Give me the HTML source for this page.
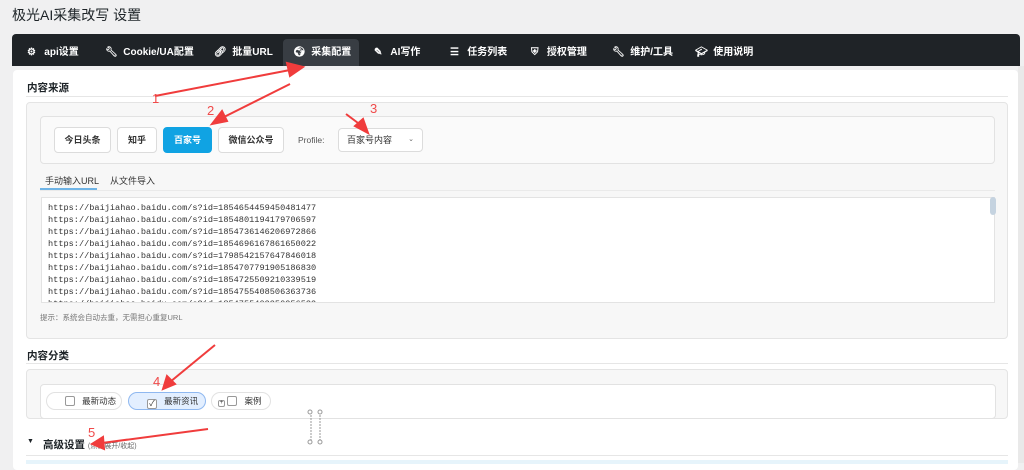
<!DOCTYPE html>
<html><head><meta charset="utf-8"><style>
*{box-sizing:border-box;margin:0;padding:0}
body{width:1024px;height:463px;overflow:hidden;background:#f0f0f1;font-family:"Liberation Sans","Noto Sans CJK SC",sans-serif;color:#1d2327;position:relative}
.abs{position:absolute}
.title{left:12px;top:5px;font-size:14px;color:#1d2327}
.nav{left:12px;top:34px;width:1008px;height:32px;background:#1f2327;border-radius:4px 4px 0 0}
.tab{position:absolute;top:5px;height:27px;line-height:27px;font-size:10px;font-weight:bold;color:#fff;white-space:nowrap}
.tab.act{background:#383d43;border-radius:4px 4px 0 0;padding:0 8px 0 10px}
.card{left:13px;top:70px;width:1005px;height:400px;background:#fff;border-radius:4px}
.h{font-size:10.5px;font-weight:bold;color:#1d2327}
.line{height:1px;background:#e6e6e6}
.panel{background:#f7f7f7;border:1px solid #e4e4e4;border-radius:4px}
.inner{background:#fafafa;border:1px solid #e2e2e2;border-radius:4px}
.btn{position:absolute;top:127px;height:26px;line-height:24px;border:1px solid #dcdcdc;border-radius:4px;background:#fff;font-size:9px;font-weight:bold;text-align:center;color:#333}
.ta{left:41px;top:197px;width:954px;height:106px;background:#fff;border:1px solid #e3e3e3;overflow:hidden;font-family:"Liberation Mono",monospace;font-size:8.6px;line-height:12px;padding:4px 6px;color:#333}
.pill{position:absolute;top:392px;height:18px;border:1px solid #e2e2e2;border-radius:9px;background:#fff;font-size:8.5px;line-height:16px;color:#333}
.cb{display:inline-block;width:10px;height:10px;border:1px solid #999;border-radius:2px;vertical-align:-2px;background:#fff}
</style></head><body>
<div class="abs title">极光AI采集改写 设置</div>
<div class="abs nav">
<div class="tab" style="left:15px">⚙&nbsp;&nbsp; api设置</div>
<div class="tab" style="left:93px">🔧︎&nbsp; Cookie/UA配置</div>
<div class="tab" style="left:202px">🔗︎&nbsp; 批量URL</div>
<div class="tab act" style="left:271px">🌍︎&nbsp; 采集配置</div>
<div class="tab" style="left:362px">✎&nbsp;&nbsp; AI写作</div>
<div class="tab" style="left:438px">☰&nbsp;&nbsp; 任务列表</div>
<div class="tab" style="left:519px">⛨&nbsp;&nbsp; 授权管理</div>
<div class="tab" style="left:600px">🔧︎&nbsp; 维护/工具</div>
<div class="tab" style="left:683px">🎓︎&nbsp; 使用说明</div>
</div>
<div class="abs card"></div>
<div class="abs h" style="left:27px;top:80px">内容来源</div>
<div class="abs line" style="left:26px;top:96px;width:982px"></div>
<div class="abs panel" style="left:26px;top:102px;width:982px;height:237px"></div>
<div class="abs inner" style="left:40px;top:116px;width:955px;height:48px"></div>
<div class="btn" style="left:54px;width:57px">今日头条</div>
<div class="btn" style="left:117px;width:40px">知乎</div>
<div class="btn" style="left:163px;width:49px;background:#10a3e3;border-color:#10a3e3;color:#fff">百家号</div>
<div class="btn" style="left:218px;width:66px">微信公众号</div>
<div class="abs" style="left:298px;top:135px;font-size:8.5px;color:#555">Profile:</div>
<div class="btn" style="left:338px;width:85px;top:128px;height:24px;line-height:22px;text-align:left;padding-left:8px;font-weight:normal">百家号内容<span style="position:absolute;right:8px;font-size:7px;color:#666">⌄</span></div>
<div class="abs" style="left:45px;top:174px;font-size:9px;color:#333">手动输入URL</div>
<div class="abs" style="left:110px;top:174px;font-size:9px;color:#333">从文件导入</div>
<div class="abs" style="left:40px;top:188px;width:57px;height:2px;background:#6fb4e6"></div>
<div class="abs line" style="left:40px;top:190px;width:955px;background:#eaeaea"></div>
<div class="abs ta">https://baijiahao.baidu.com/s?id=1854654459450481477<br>https://baijiahao.baidu.com/s?id=1854801194179706597<br>https://baijiahao.baidu.com/s?id=1854736146206972866<br>https://baijiahao.baidu.com/s?id=1854696167861650022<br>https://baijiahao.baidu.com/s?id=1798542157647846018<br>https://baijiahao.baidu.com/s?id=1854707791905186830<br>https://baijiahao.baidu.com/s?id=1854725509210339519<br>https://baijiahao.baidu.com/s?id=1854755408506363736<br>https://baijiahao.baidu.com/s?id=1854755409350956539</div>
<div class="abs" style="left:990px;top:197px;width:6px;height:18px;background:#c5d3e0;border-radius:3px"></div>
<div class="abs" style="left:40px;top:312px;font-size:7.5px;color:#777">提示：系统会自动去重，无需担心重复URL</div>
<div class="abs h" style="left:27px;top:348px">内容分类</div>
<div class="abs line" style="left:26px;top:363px;width:982px"></div>
<div class="abs panel" style="left:26px;top:369px;width:982px;height:50px"></div>
<div class="abs inner" style="left:40px;top:384px;width:956px;height:35px;background:#fff"></div>
<div class="pill" style="left:46px;width:76px;padding-left:18px"><span class="cb"></span>&nbsp;&nbsp; 最新动态</div>
<div class="pill" style="left:128px;width:78px;padding-left:18px;background:#e3efff;border-color:#8fb8f0"><span class="cb" style="font-size:8px;line-height:8px;text-align:center">✓</span>&nbsp;&nbsp; 最新资讯</div>
<div class="pill" style="left:211px;width:60px;padding-left:6px"><span class="cb" style="width:7px;height:7px;font-size:6px;line-height:5px;text-align:center;vertical-align:0">+</span> <span class="cb"></span>&nbsp;&nbsp; 案例</div>
<div class="abs" style="left:27px;top:438px;font-size:7px">▼</div>
<div class="abs h" style="left:43px;top:437px">高级设置 <span style="font-weight:normal;font-size:7px;color:#666">(点击展开/收起)</span></div>
<div class="abs line" style="left:26px;top:455px;width:982px"></div>
<div class="abs" style="left:26px;top:460px;width:982px;height:4px;background:#e6f4fb"></div>
<div class="abs" style="left:1018px;top:66px;width:6px;height:397px;background:#e9e9e9"></div>
<svg class="abs" style="left:0;top:0" width="1024" height="463">
<g stroke="#999" stroke-dasharray="2,1" fill="none"><line x1="311" y1="412" x2="311" y2="442"/><line x1="320" y1="412" x2="320" y2="442"/></g>
<g fill="#fff" stroke="#999"><circle cx="310" cy="412" r="2"/><circle cx="320" cy="412" r="2"/><circle cx="310" cy="442" r="2"/><circle cx="320" cy="442" r="2"/></g>
<g stroke="#f03c3c" stroke-width="2" fill="#f03c3c">
<line x1="155" y1="96" x2="290" y2="70"/><polygon points="303,67 287,63 290,76"/>
<line x1="290" y1="84" x2="222" y2="118"/><polygon points="212,124 222,111 227,121"/>
<line x1="346" y1="114" x2="362" y2="126"/><polygon points="368,133 355,126 363,119"/>
<line x1="215" y1="345" x2="170" y2="382"/><polygon points="163,389 167,376 175,384"/>
<line x1="208" y1="429" x2="102" y2="443"/><polygon points="92,444 103,437 104,449"/>
</g>
<g fill="#f04a4a" font-family="Liberation Sans" font-size="13"><text x="152" y="103">1</text><text x="207" y="115">2</text><text x="370" y="113">3</text><text x="153" y="386">4</text><text x="88" y="437">5</text></g>
</svg>
</body></html>
